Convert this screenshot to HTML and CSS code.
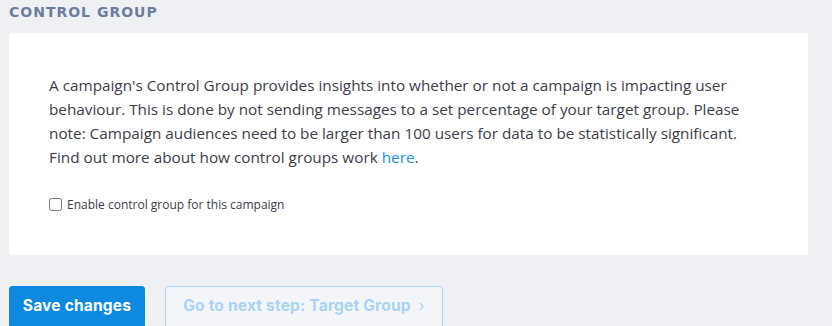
FILE: index.html
```html
<!DOCTYPE html>
<html lang="en">
<head>
<meta charset="utf-8">
<link rel="stylesheet" href="styles.css">
</head>
<body>
<div class="page">
  <h2 class="section-title">CONTROL GROUP</h2>
  <div class="card">
    <p class="desc">A campaign's Control Group provides insights into whether or not a campaign is impacting user behaviour. This is done by not sending messages to a set percentage of your target group. Please note: Campaign audiences need to be larger than 100 users for data to be statistically significant. Find out more about how control groups work <a href="#" class="link">here</a>.</p>
    <label class="check-row"><input type="checkbox" class="check"><span>Enable control group for this campaign</span></label>
  </div>
  <div class="actions">
    <button class="btn btn-primary">Save changes</button>
    <button class="btn btn-secondary">Go to next step: Target Group <span class="chev">›</span></button>
  </div>
</div>
</body>
</html>
```
FILE: styles.css
```css
html, body {
  margin: 0;
  padding: 0;
  background: #eff0f4;
}
.page {
  padding: 2px 24px 0 9px;
}
.section-title {
  margin: 0 0 11px 0;
  font-family: "DejaVu Sans", sans-serif;
  font-weight: bold;
  font-size: 14px;
  letter-spacing: 1px;
  line-height: 20px;
  color: #6c7d9c;
}
.card {
  background: #ffffff;
  border-radius: 3px;
  padding: 40px 40px 40px 40px;
  height: 142px;
}
.desc {
  margin: 0 0 24px 0;
  font-family: "Open Sans", sans-serif;
  font-size: 15.3px;
  line-height: 24px;
  color: #3d3d48;
}
.link {
  color: #1a8fe3;
  text-decoration: none;
}
.check-row {
  display: flex;
  align-items: center;
  gap: 5px;
  font-family: "Open Sans", sans-serif;
  font-size: 12px;
  color: #3d3d48;
  height: 22px;
}
.check {
  margin: 0;
  width: 13px;
  height: 13px;
}
.actions {
  display: flex;
  gap: 20px;
  margin-top: 31px;
}
.btn {
  font-family: "Inter", sans-serif;
  font-weight: 700;
  font-size: 15.5px;
  letter-spacing: 0.2px;
  height: 42px;
  border-radius: 3px;
  padding: 0 0 3px 0;
  white-space: nowrap;
  text-align: center;
}
.btn-primary {
  background: #0d8ae0;
  border: 1px solid #0d8ae0;
  color: #ffffff;
  width: 136px;
}
.btn-secondary {
  background: #f3f5f8;
  border: 1px solid #a9d3f2;
  color: #a9d3f2;
  width: 278px;
}
.chev {
  margin-left: 4px;
  font-weight: 400;
}
```
